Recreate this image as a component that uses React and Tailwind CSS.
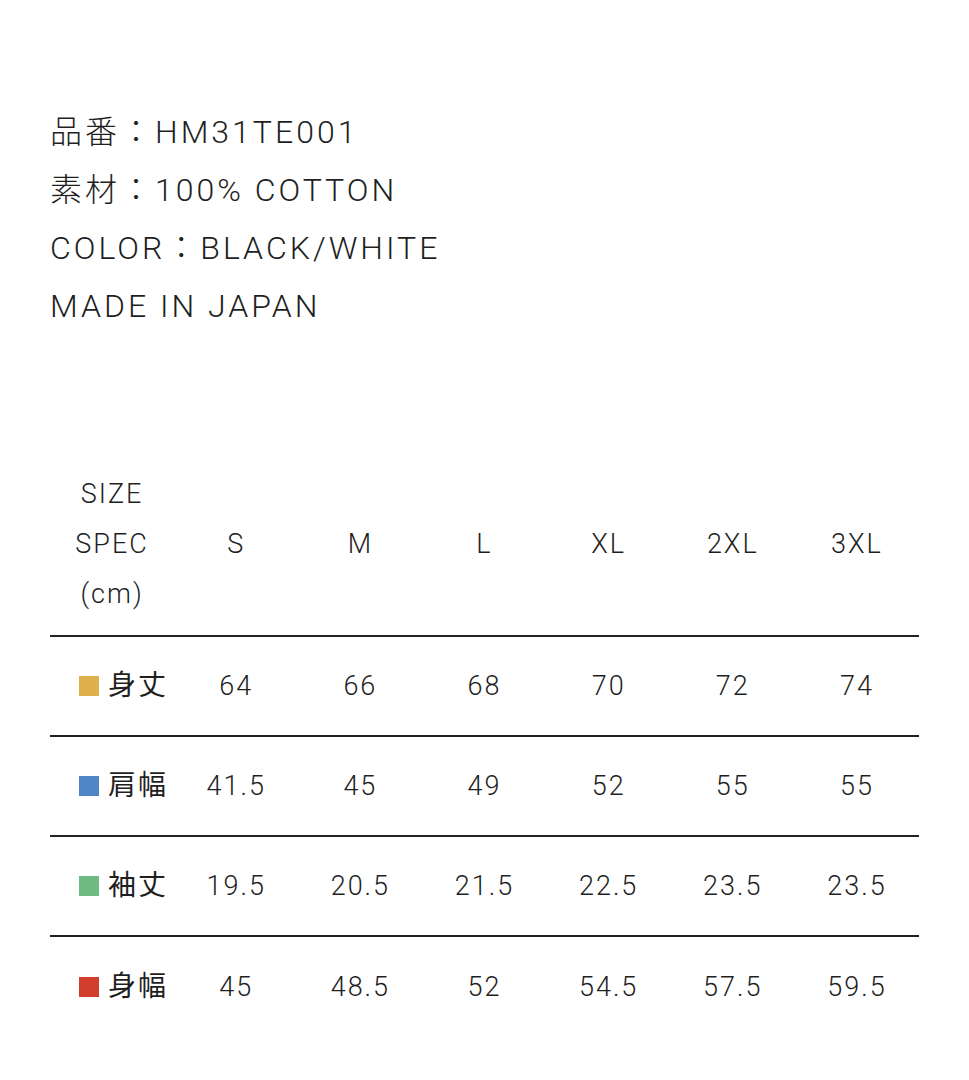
import React from 'react';

const sizes = ['S', 'M', 'L', 'XL', '2XL', '3XL'];

const rows = [
  { label: '身丈', color: 'bg-[#dfb04e]', values: ['64', '66', '68', '70', '72', '74'] },
  { label: '肩幅', color: 'bg-[#4f86c8]', values: ['41.5', '45', '49', '52', '55', '55'] },
  { label: '袖丈', color: 'bg-[#6dbb83]', values: ['19.5', '20.5', '21.5', '22.5', '23.5', '23.5'] },
  { label: '身幅', color: 'bg-[#d23e2c]', values: ['45', '48.5', '52', '54.5', '57.5', '59.5'] },
];

export default function App() {
  return (
    <div className="min-h-screen w-full bg-white text-[#1f1f1f] font-light font-['Roboto','Noto_Sans_CJK_JP',sans-serif]">
      <div className="pl-[50px] pt-[103px] text-[32px] leading-[58px] tracking-[3px]">
        <p>品番：HM31TE001</p>
        <p>素材：100% COTTON</p>
        <p>COLOR：BLACK/WHITE</p>
        <p>MADE IN JAPAN</p>
      </div>

      <div className="mx-[50px] mt-[118px] text-[27px] tracking-[2px]">
        <div className="grid grid-cols-7 border-b-2 border-[#222] py-[16px] leading-[50px]">
          <div className="flex flex-col items-center">
            <span>SIZE</span>
            <span>SPEC</span>
            <span>(cm)</span>
          </div>
          {sizes.map((s) => (
            <div key={s} className="flex items-center justify-center">{s}</div>
          ))}
        </div>

        {rows.map((r, i) => (
          <div
            key={r.label}
            className={`grid grid-cols-7 h-[100px] items-center ${i < rows.length - 1 ? 'border-b-2 border-[#222]' : ''}`}
          >
            <div className="flex items-center pl-[29px] gap-[9px]">
              <span className={`inline-block w-[20px] h-[20px] ${r.color}`} />
              <span className="text-[28px] font-normal">{r.label}</span>
            </div>
            {r.values.map((v, j) => (
              <div key={j} className="text-center">{v}</div>
            ))}
          </div>
        ))}
      </div>
    </div>
  );
}
